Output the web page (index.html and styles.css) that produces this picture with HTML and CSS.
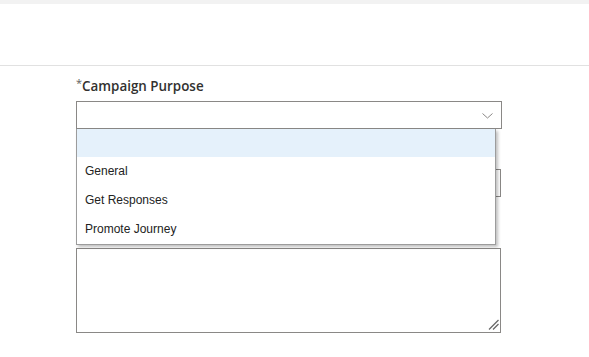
FILE: index.html
```html
<!DOCTYPE html>
<html lang="en">
<head>
  <title>Campaign Purpose</title>
  <meta charset="utf-8">
  <meta name="viewport" content="width=device-width, initial-scale=1">
  <link rel="stylesheet" href="styles.css">
</head>
<body>
  <div class="topbar"></div>
  <header class="header"></header>
  <form class="form">
    <div class="field field-purpose">
      <label class="label"><span class="required">*</span>Campaign Purpose</label>
      <div class="select">
        <svg class="chevron" width="11" height="6" viewBox="0 0 11 6">
          <path d="M0.5 0.5 L5.5 5 L10.5 0.5" fill="none" stroke="#8a8886" stroke-width="1"/>
        </svg>
      </div>
      <ul class="listbox">
        <li class="option option-selected"></li>
        <li class="option">General</li>
        <li class="option">Get Responses</li>
        <li class="option">Promote Journey</li>
      </ul>
    </div>
    <div class="field field-name">
      <input class="input" type="text">
    </div>
    <div class="field field-notes">
      <textarea class="textarea"></textarea>
      <svg class="grip" width="11" height="11" viewBox="0 0 11 11">
        <path d="M1 10.5 L10.5 1 M5 10.5 L10.5 5" fill="none" stroke="#6a6a6a" stroke-width="1.3"/>
      </svg>
    </div>
  </form>
</body>
</html>
```

FILE: styles.css
```css
* {
  margin: 0;
  box-sizing: border-box;
}

body {
  background-color: #FFFFFF;
  font-family: "Open Sans", sans-serif;
  color: #323130;
}

.topbar {
  height: 4px;
  background-color: #F2F2F2;
}

.header {
  height: 62px;
  border-bottom: 1px solid #E1E1E1;
}

.form {
  padding-left: 76px;
  width: 502px;
}

.field {
  position: relative;
}

.field-purpose {
  padding-top: 12px;
}

.label {
  display: block;
  height: 23px;
  font-size: 13.4px;
  font-weight: 600;
  line-height: 17px;
}

.required {
  position: relative;
  top: -4px;
  font-size: 11px;
  font-weight: 400;
  color: #605E5C;
}

.select {
  position: relative;
  height: 28px;
  border: 1px solid #8A8886;
  background-color: #FFFFFF;
}

.chevron {
  position: absolute;
  right: 8px;
  top: 11px;
}

.listbox {
  position: absolute;
  z-index: 2;
  top: 63px;
  left: 0;
  width: 420px;
  padding: 0;
  list-style: none;
  border: 1px solid #9C9C9C;
  border-top: none;
  background-color: #FFFFFF;
  box-shadow: 2px 2px 3px rgba(0, 0, 0, 0.25);
  font-family: "Liberation Sans", Arial, sans-serif;
  font-size: 12px;
  color: #222222;
}

.option {
  height: 29px;
  padding-left: 8px;
  line-height: 29px;
}

.option-selected {
  height: 28px;
  background-color: #E5F1FB;
}

.field-name {
  padding-top: 40px;
}

.input {
  display: block;
  width: 425px;
  height: 28px;
  border: 1px solid #8A8886;
  outline: none;
}

.field-notes {
  padding-top: 51px;
}

.textarea {
  display: block;
  width: 425px;
  height: 85px;
  border: 1px solid #8A8886;
  outline: none;
  resize: none;
}

.grip {
  position: absolute;
  left: 412px;
  bottom: 3px;
}
```
